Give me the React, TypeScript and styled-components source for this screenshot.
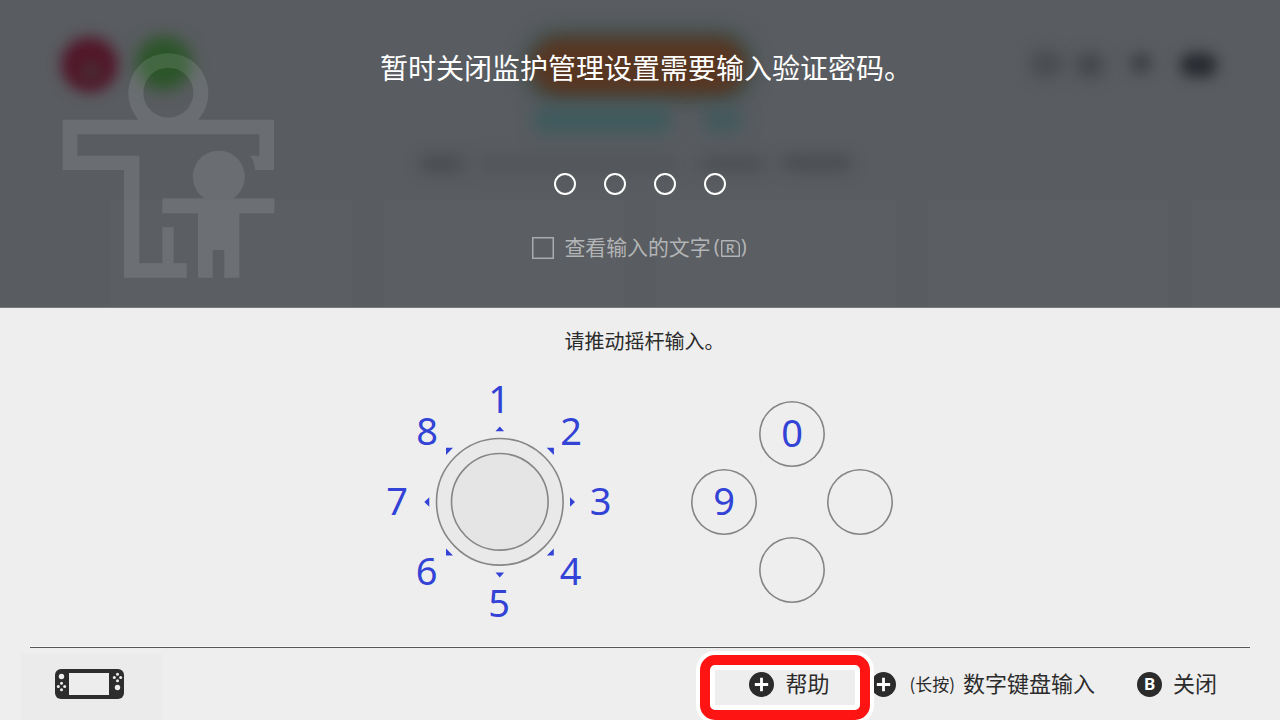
import React from "react";
import styled, { createGlobalStyle } from "styled-components";

const GlobalStyle = createGlobalStyle`
  * { box-sizing: border-box; }
  body {
    margin: 0;
    overflow: hidden;
    font-family: "Noto Sans CJK SC", "Noto Sans", sans-serif;
  }
`;

const Screen = styled.main`
  position: relative;
  display: flex;
  flex-direction: column;
  width: 1280px;
  height: 720px;
  overflow: hidden;
  background: #eeeeee;
  color: #2b2b2b;
`;

const PromptPanel = styled.section`
  position: relative;
  display: flex;
  flex-direction: column;
  align-items: center;
  height: 308px;
  padding-top: 47px;
  overflow: hidden;
  background: #595c60;
  border-bottom: 1px solid #77797b;
  color: #fff;
`;

const Backdrop = styled.div`
  position: absolute;
  inset: 0;
`;

const Blob = styled.span<{
  $x: number;
  $y: number;
  $w: number;
  $h: number;
  $color: string;
  $blur: number;
}>`
  position: absolute;
  left: ${(p) => p.$x}px;
  top: ${(p) => p.$y}px;
  width: ${(p) => p.$w}px;
  height: ${(p) => p.$h}px;
  border-radius: ${(p) => p.$h / 2}px;
  background: ${(p) => p.$color};
  filter: blur(${(p) => p.$blur}px);
`;

const Tile = styled.span<{ $x: number; $w: number }>`
  position: absolute;
  top: 200px;
  bottom: 0;
  left: ${(p) => p.$x}px;
  width: ${(p) => p.$w}px;
  background: #5b5e62;
`;

const FamilyMark = styled.svg`
  position: absolute;
  left: 62px;
  top: 52px;
  width: 213px;
  height: 227px;
  opacity: 0.11;
`;

const Title = styled.h1`
  position: relative;
  margin: 0;
  padding-left: 12px;
  font-size: 28px;
  line-height: 40px;
  font-weight: 400;
`;

const PinRow = styled.div`
  position: relative;
  display: flex;
  gap: 28px;
  margin-top: 86px;
`;

const PinDot = styled.span`
  width: 22px;
  height: 22px;
  border: 2px solid #fff;
  border-radius: 50%;
`;

const RevealOption = styled.label`
  position: relative;
  display: flex;
  align-items: center;
  height: 30px;
  margin-top: 38px;
  color: #b2b4b6;
  font-size: 20.9px;
  line-height: 30px;
`;

const RevealText = styled.span`
  position: relative;
  top: -2px;
`;

const CheckSquare = styled.span`
  width: 22px;
  height: 22px;
  margin: 0 10px 0 0;
  box-shadow: inset 0 0 0 1.5px #a9abad;
`;

const Paren = styled.span`
  margin: -4px 1px 0 3px;
  font-family: "Noto Sans", sans-serif;
  font-size: 20px;
`;

const ShoulderKey = styled.span`
  display: flex;
  align-items: center;
  justify-content: center;
  width: 19px;
  height: 17px;
  margin: 0 -2px 0 0;
  box-shadow: inset 0 0 0 1.4px #b2b4b6;
  border-radius: 1px 6px 1px 1px;
  font-family: Roboto, sans-serif;
  font-size: 13px;
  font-weight: 500;
  line-height: 17px;
`;

const InputPanel = styled.section`
  display: flex;
  flex-direction: column;
  align-items: center;
  flex: 1;
  padding-top: 18px;
`;

const Hint = styled.p`
  margin: 0;
  padding-left: 9px;
  font-size: 20px;
  line-height: 30px;
`;

const Controls = styled.div`
  display: flex;
  align-items: center;
  gap: 70px;
  width: 520px;
  height: 260px;
  margin-top: 16px;
`;

const Dial = styled.svg`
  flex: none;
  width: 240px;
  height: 260px;

  text {
    fill: #3243d6;
    font-family: "Noto Sans", sans-serif;
    font-size: 38px;
    text-anchor: middle;
  }
`;

const FaceButtons = styled.div`
  display: grid;
  grid-template-columns: repeat(3, 68px);
  grid-template-rows: repeat(3, 68px);
  place-items: center;
`;

const FaceButton = styled.span<{ $col: number; $row: number }>`
  grid-column: ${(p) => p.$col};
  grid-row: ${(p) => p.$row};
  display: flex;
  align-items: center;
  justify-content: center;
  width: 66px;
  height: 66px;
  padding-bottom: 4px;
  box-shadow: inset 0 0 0 1.6px #858585;
  border-radius: 50%;
  color: #3243d6;
  font-family: "Noto Sans", sans-serif;
  font-size: 38px;
  line-height: 1;
`;

const Footer = styled.footer`
  display: flex;
  justify-content: space-between;
  height: 73px;
  margin: 0 30px;
  border-top: 1px solid #555;
  box-shadow: 0 -1px 0 #f8f8f8;
`;

const ControllerSlot = styled.div`
  width: 141px;
  height: 66px;
  margin: 6px 0 0 -9px;
  padding: 15px 0 0 34px;
  background: #ebebeb;
`;

const Actions = styled.nav`
  display: flex;
  align-items: center;
  height: 72px;
  padding-right: 33px;
  font-size: 22px;
  line-height: 32px;
`;

const Action = styled.div<{ $before?: number }>`
  display: flex;
  align-items: center;
  margin-left: ${(p) => p.$before ?? 0}px;
`;

const ActionLabel = styled.span`
  margin-top: -4px;
`;

const ActionIcon = styled.svg<{ $gap?: number }>`
  width: 25px;
  height: 25px;
  margin-right: ${(p) => p.$gap ?? 11}px;
`;

const Note = styled.small`
  display: flex;
  align-items: center;
  margin: 0 8px 0 0;
  font-size: 17px;
`;

const Highlight = styled.div`
  position: absolute;
  left: 700px;
  top: 655px;
  width: 170px;
  height: 65px;
  border: 10px solid #ff1414;
  border-radius: 15px;
  box-shadow: 0 0 0 4px #fff, inset 0 0 0 5px #fff;
`;

const PlusIcon = ({ gap }: { gap?: number }) => (
  <ActionIcon viewBox="0 0 24 24" $gap={gap}>
    <circle cx="12" cy="12" r="12" fill="#2b2b2b" />
    <path d="M12 5.6v12.8M5.6 12h12.8" stroke="#fff" strokeWidth="2.7" />
  </ActionIcon>
);

const BIcon = () => (
  <ActionIcon viewBox="0 0 24 24">
    <circle cx="12" cy="12" r="12" fill="#2b2b2b" />
    <text x="12.2" y="17.6" textAnchor="middle" fill="#fff" fontFamily="Roboto, sans-serif" fontWeight="700" fontSize="16.5">
      B
    </text>
  </ActionIcon>
);

const blobs = [
  { x: 61, y: 37, w: 57, h: 55, color: "#52182a", blur: 7 },
  { x: 80, y: 62, w: 22, h: 20, color: "rgba(70,50,54,.7)", blur: 6 },
  { x: 136, y: 36, w: 56, h: 54, color: "#2c5529", blur: 8 },
  { x: 522, y: 28, w: 234, h: 76, color: "rgba(62,78,74,.8)", blur: 9 },
  { x: 532, y: 38, w: 214, h: 56, color: "#573622", blur: 8 },
  { x: 532, y: 108, w: 140, h: 25, color: "rgba(54,90,92,.8)", blur: 9 },
  { x: 702, y: 108, w: 42, h: 25, color: "rgba(56,88,92,.7)", blur: 9 },
  { x: 420, y: 156, w: 42, h: 16, color: "rgba(66,68,72,.75)", blur: 8 },
  { x: 478, y: 158, w: 200, h: 12, color: "rgba(70,72,76,.55)", blur: 9 },
  { x: 700, y: 158, w: 65, h: 12, color: "rgba(66,68,72,.7)", blur: 8 },
  { x: 782, y: 156, w: 70, h: 14, color: "rgba(66,68,72,.75)", blur: 8 },
  { x: 1030, y: 51, w: 32, h: 26, color: "rgba(66,68,72,.7)", blur: 8 },
  { x: 1076, y: 53, w: 28, h: 24, color: "rgba(64,66,70,.85)", blur: 8 },
  { x: 1130, y: 53, w: 22, h: 20, color: "rgba(60,62,66,.95)", blur: 7 },
  { x: 1180, y: 53, w: 37, h: 24, color: "#282b30", blur: 7 },
];

const tiles = [
  { x: 110, w: 242 },
  { x: 384, w: 240 },
  { x: 656, w: 240 },
  { x: 928, w: 240 },
  { x: 1192, w: 88 },
];

const dialDigits = [
  { n: 1, x: 119.2, y: 41 },
  { n: 2, x: 191.2, y: 72.7 },
  { n: 3, x: 220.7, y: 142.7 },
  { n: 4, x: 190.7, y: 212.7 },
  { n: 5, x: 119, y: 245 },
  { n: 6, x: 46.7, y: 212.7 },
  { n: 7, x: 17, y: 142.7 },
  { n: 8, x: 47, y: 72.7 },
];

const arrows =
  "M115.5 59.3l4.3-4.8 4.3 4.8z M115.5 200.5l4.3 5 4.3-5z M190 125.2l5 4.8-5 4.8z M49.3 125.2l-5 4.8 5 4.8z M166.7 75.7h7.2v7.2z M66 75.7h7l-7 7.2z M66 176.4v7.2h7z M173.8 176.4v7.2h-7z";

export default function App() {
  return (
    <Screen>
      <GlobalStyle />
      <PromptPanel>
        <Backdrop>
          {tiles.map((t) => (
            <Tile key={t.x} $x={t.x} $w={t.w} />
          ))}
          {blobs.map((b) => (
            <Blob key={`${b.x}-${b.y}`} $x={b.x} $y={b.y} $w={b.w} $h={b.h} $color={b.color} $blur={b.blur} />
          ))}
        </Backdrop>
        <FamilyMark viewBox="186 156 639 681" fill="#f4fbff">
          <path
            fillRule="evenodd"
            d="M415 359A120 120 0 1 1 595 359H822V510H765Q764 484 750 467H778V403H232V467H418V790H487V682H521V790H560V833H372V510H188V359ZM430 278a75 75 0 1 0 150 0a75 75 0 1 0-150 0Z"
          />
          <path d="M613 595A78 78 0 1 1 700 595H823V640H718V833H673V750H638V833H594V640H487V595Z" />
        </FamilyMark>
        <Title>暂时关闭监护管理设置需要输入验证密码。</Title>
        <PinRow>
          <PinDot />
          <PinDot />
          <PinDot />
          <PinDot />
        </PinRow>
        <RevealOption>
          <CheckSquare />
          <RevealText>查看输入的文字</RevealText>
          <Paren>(</Paren>
          <ShoulderKey>R</ShoulderKey>
          <Paren>)</Paren>
        </RevealOption>
      </PromptPanel>

      <InputPanel>
        <Hint>请推动摇杆输入。</Hint>
        <Controls>
          <Dial viewBox="0 0 240 260">
            <circle cx="119.8" cy="129.8" r="63.3" fill="#e9e9e9" stroke="#868686" strokeWidth="1.6" />
            <circle cx="119.8" cy="129.8" r="48.3" fill="#e5e5e5" stroke="#868686" strokeWidth="1.6" />
            <path d={arrows} fill="#3243d6" />
            {dialDigits.map((d) => (
              <text key={d.n} x={d.x} y={d.y}>
                {d.n}
              </text>
            ))}
          </Dial>
          <FaceButtons>
            <FaceButton $col={2} $row={1}>0</FaceButton>
            <FaceButton $col={1} $row={2}>9</FaceButton>
            <FaceButton $col={3} $row={2} />
            <FaceButton $col={2} $row={3} />
          </FaceButtons>
        </Controls>
      </InputPanel>

      <Footer>
        <ControllerSlot>
          <svg width="69" height="30" viewBox="0 0 69 30">
            <rect width="69" height="30" rx="6" fill="#2d2d2d" />
            <rect x="14" y="4" width="40" height="22" fill="#ededed" />
            <g fill="#eee">
              <circle cx="6.5" cy="7.5" r="2.7" />
              <circle cx="62.5" cy="18.5" r="2.7" />
              <circle cx="6.5" cy="14.3" r="1.5" />
              <circle cx="6.5" cy="20.7" r="1.5" />
              <circle cx="3.3" cy="17.5" r="1.5" />
              <circle cx="9.7" cy="17.5" r="1.5" />
              <circle cx="62.5" cy="5.3" r="1.5" />
              <circle cx="62.5" cy="11.7" r="1.5" />
              <circle cx="59.3" cy="8.5" r="1.5" />
              <circle cx="65.7" cy="8.5" r="1.5" />
            </g>
          </svg>
        </ControllerSlot>
        <Actions>
          <Action>
            <PlusIcon />
            <ActionLabel>帮助</ActionLabel>
          </Action>
          <Action $before={42}>
            <PlusIcon gap={13} />
            <Note>(长按)</Note>
            <ActionLabel>数字键盘输入</ActionLabel>
          </Action>
          <Action $before={42}>
            <BIcon />
            <ActionLabel>关闭</ActionLabel>
          </Action>
        </Actions>
      </Footer>
      <Highlight />
    </Screen>
  );
}
